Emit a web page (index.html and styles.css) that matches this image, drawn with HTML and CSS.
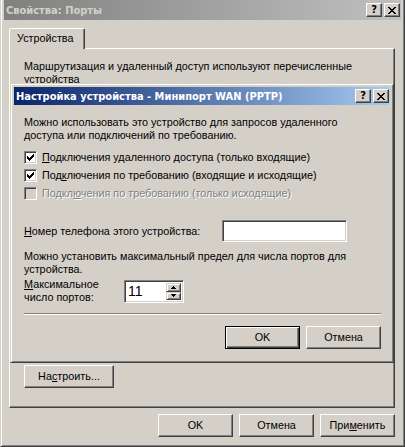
FILE: index.html
```html
<!DOCTYPE html>
<html lang="ru">
<head>
<meta charset="utf-8">
<title>Свойства: Порты</title>
<link rel="stylesheet" href="styles.css">
</head>
<body>
<div class="window">
  <div class="caption inactive">
    <span class="caption-title">Свойства: Порты</span>
    <div class="caption-btns">
      <span class="cbtn help">?</span>
      <span class="cbtn"><svg width="8" height="7" viewBox="0 0 8 7" shape-rendering="crispEdges"><path d="M0 0h2v1H0z M6 0h2v1H6z M1 1h2v1H1z M5 1h2v1H5z M2 2h4v1H2z M3 3h2v1H3z M2 4h4v1H2z M1 5h2v1H1z M5 5h2v1H5z M0 6h2v1H0z M6 6h2v1H6z" fill="#000"/></svg></span>
    </div>
  </div>
  <div class="client">
    <div class="tabs"><div class="tab">Устройства</div></div>
    <div class="panel">
      <p class="text">Маршрутизация и удаленный доступ используют перечисленные<br>устройства</p>
      <div class="spacer"></div>
      <button class="btn wide">На<u>с</u>троить...</button>
    </div>
    <div class="actions">
      <button class="btn">OK</button>
      <button class="btn">Отмена</button>
      <button class="btn">При<u>м</u>енить</button>
    </div>
  </div>

  <div class="dialog">
    <div class="caption active small">
      <span class="caption-title">Настройка устройства - Минипорт WAN (PPTP)</span>
      <div class="caption-btns">
        <span class="cbtn help">?</span>
        <span class="cbtn"><svg width="8" height="7" viewBox="0 0 8 7" shape-rendering="crispEdges"><path d="M0 0h2v1H0z M6 0h2v1H6z M1 1h2v1H1z M5 1h2v1H5z M2 2h4v1H2z M3 3h2v1H3z M2 4h4v1H2z M1 5h2v1H1z M5 5h2v1H5z M0 6h2v1H0z M6 6h2v1H6z" fill="#000"/></svg></span>
      </div>
    </div>
    <div class="dlg-body">
      <p class="text">Можно использовать это устройство для запросов удаленного<br>доступа или подключений по требованию.</p>
      <div class="checks">
        <div class="check-row">
          <span class="cb"><svg width="7" height="7" viewBox="0 0 7 7" shape-rendering="crispEdges"><path d="M6 0h1v1H6z M5 1h2v1H5z M0 2h1v1H0z M4 2h3v1H4z M0 3h2v1H0z M3 3h3v1H3z M0 4h5v1H0z M1 5h3v1H1z M2 6h1v1H2z" fill="#000"/></svg></span>
          <span class="cb-label"><u>П</u>одключения удаленного доступа (только входящие)</span>
        </div>
        <div class="check-row">
          <span class="cb"><svg width="7" height="7" viewBox="0 0 7 7" shape-rendering="crispEdges"><path d="M6 0h1v1H6z M5 1h2v1H5z M0 2h1v1H0z M4 2h3v1H4z M0 3h2v1H0z M3 3h3v1H3z M0 4h5v1H0z M1 5h3v1H1z M2 6h1v1H2z" fill="#000"/></svg></span>
          <span class="cb-label">Под<u>к</u>лючения по требованию (входящие и исходящие)</span>
        </div>
        <div class="check-row">
          <span class="cb disabled"></span>
          <span class="cb-label disabled-text">Подкл<u>ю</u>чения по требованию (только исходящие)</span>
        </div>
      </div>
      <div class="phone-row">
        <span class="phone-label"><u>Н</u>омер телефона этого устройства:</span>
        <span class="edit"></span>
      </div>
      <p class="text ports-text">Можно установить максимальный предел для числа портов для<br>устройства.</p>
      <div class="ports-row">
        <span class="ports-label"><u>М</u>аксимальное<br>число портов:</span>
        <div class="spin">
          <span class="spin-value">11</span>
          <div class="spin-btns">
            <span class="sbtn"><svg width="5" height="3" viewBox="0 0 5 3" shape-rendering="crispEdges"><path d="M2 0h1v1H2z M1 1h3v1H1z M0 2h5v1H0z" fill="#000"/></svg></span>
            <span class="sbtn"><svg width="5" height="3" viewBox="0 0 5 3" shape-rendering="crispEdges"><path d="M0 0h5v1H0z M1 1h3v1H1z M2 2h1v1H2z" fill="#000"/></svg></span>
          </div>
        </div>
      </div>
      <div class="sep"></div>
      <div class="dlg-actions">
        <button class="btn default">OK</button>
        <button class="btn">Отмена</button>
      </div>
    </div>
  </div>
</div>
</body>
</html>
```
FILE: styles.css
```css
* { box-sizing: border-box; margin: 0; padding: 0; }
html, body { margin: 0; background: #d4d0c8; }
body {
  font-family: "Liberation Sans", Arial, sans-serif;
  font-size: 10.8px;
  line-height: 13px;
  color: #000;
}
.window {
  position: relative;
  width: 405px;
  height: 447px;
  background: #d4d0c8;
  border: 1px solid;
  border-top: 0;
  border-color: #d4d0c8 #404040 #404040 #d4d0c8;
  box-shadow: inset 1px 0 #fff, inset -1px -1px #808080;
  padding: 0 3px 3px 3px;
  display: flex;
  flex-direction: column;
  overflow: hidden;
}
.caption {
  height: 20px;
  display: flex;
  align-items: center;
  justify-content: space-between;
  padding: 0 1px 0 2px;
  flex: none;
}
.caption.small { height: 18px; }
.caption.inactive {
  background: linear-gradient(to right, #808080, #c0c0c0);
  color: #d4d0c8;
}
.caption.active {
  background: linear-gradient(to right, #0a246a, #a6caf0);
  color: #fff;
}
.caption-title {
  font-family: "DejaVu Sans Condensed", "DejaVu Sans", sans-serif;
  font-weight: bold;
  font-size: 11px;
  white-space: nowrap;
}
.caption-btns { display: flex; gap: 2px; }
.cbtn {
  width: 16px;
  height: 14px;
  background: #d4d0c8;
  border: 1px solid;
  border-color: #fff #404040 #404040 #fff;
  box-shadow: inset -1px -1px #808080;
  display: flex;
  align-items: center;
  justify-content: center;
  color: #000;
}
.cbtn.help {
  font-family: "DejaVu Sans Condensed", "DejaVu Sans", sans-serif;
  font-weight: bold;
  font-size: 11px;
  line-height: 12px;
}

.client {
  flex: 1;
  display: flex;
  flex-direction: column;
  padding: 8px 6px 6px 5px;
}
.tabs { display: flex; }
.tab {
  position: relative;
  z-index: 1;
  width: 76px;
  height: 21px;
  margin-bottom: -1px;
  padding: 0 0 1px 7px;
  background: #d4d0c8;
  border: 1px solid;
  border-bottom: 0;
  border-color: #fff #404040 transparent #fff;
  border-radius: 2px 2px 0 0;
  box-shadow: inset -1px 0 #808080;
  display: flex;
  align-items: center;
}
.panel {
  height: 360px;
  border: 1px solid;
  border-color: #fff #404040 #404040 #fff;
  box-shadow: inset -1px -1px #808080;
  padding: 11px 14px 19px 14px;
  display: flex;
  flex-direction: column;
}
.spacer { flex: 1; }
.text { white-space: nowrap; }

.btn {
  width: 75px;
  height: 23px;
  background: #d4d0c8;
  border: 1px solid;
  border-color: #fff #404040 #404040 #fff;
  box-shadow: inset -1px -1px #808080;
  font: inherit;
  color: #000;
  display: flex;
  align-items: center;
  justify-content: center;
  flex: none;
}
.btn.wide { width: 90px; }
.btn.default {
  border-color: #000;
  box-shadow: inset 1px 1px #fff, inset -1px -1px #404040, inset -2px -2px #808080;
}
.actions {
  display: flex;
  justify-content: flex-end;
  gap: 6px;
  margin-top: 6px;
}

.dialog {
  position: absolute;
  left: 9px;
  top: 83px;
  width: 384px;
  height: 280px;
  z-index: 5;
  background: #d4d0c8;
  border: 1px solid;
  border-color: #d4d0c8 #404040 #404040 #d4d0c8;
  box-shadow: inset 1px 1px #fff, inset -1px -1px #808080;
  padding: 3px;
  display: flex;
  flex-direction: column;
}
.dlg-body {
  flex: 1;
  display: flex;
  flex-direction: column;
  padding: 11px 9px 0 10px;
}
.checks { margin-top: 6px; }
.check-row {
  height: 18px;
  display: flex;
  align-items: center;
  gap: 5px;
}
.cb {
  width: 13px;
  height: 13px;
  background: #fff;
  border: 1px solid;
  border-color: #808080 #fff #fff #808080;
  box-shadow: inset 1px 1px #404040, inset -1px -1px #d4d0c8;
  display: flex;
  align-items: center;
  justify-content: center;
  flex: none;
}
.cb.disabled { background: #d4d0c8; }
.cb-label { white-space: nowrap; }
.disabled-text { color: #808080; text-shadow: 1px 1px #fff; }

.phone-row {
  margin-top: 18px;
  display: flex;
  align-items: center;
}
.phone-label { width: 198px; flex: none; white-space: nowrap; }
.edit {
  width: 125px;
  height: 22px;
  background: #fff;
  border: 1px solid;
  border-color: #808080 #fff #fff #808080;
  box-shadow: inset 1px 1px #404040, inset -1px -1px #d4d0c8;
}
.ports-text { margin-top: 8px; }
.ports-row {
  margin-top: 2px;
  display: flex;
  align-items: flex-start;
}
.ports-label { width: 100px; flex: none; white-space: nowrap; }
.spin {
  margin-top: 2px;
  width: 60px;
  height: 23px;
  background: #fff;
  border: 1px solid;
  border-color: #808080 #fff #fff #808080;
  box-shadow: inset 1px 1px #404040, inset -1px -1px #d4d0c8;
  padding: 2px 2px 2px 3px;
  display: flex;
}
.spin-value {
  flex: 1;
  font-size: 14px;
  line-height: 17px;
}
.spin-btns {
  width: 15px;
  display: flex;
  flex-direction: column;
}
.sbtn {
  flex: 1;
  background: #d4d0c8;
  border: 1px solid;
  border-color: #d4d0c8 #404040 #404040 #d4d0c8;
  box-shadow: inset 1px 1px #fff, inset -1px -1px #808080;
  display: flex;
  align-items: center;
  justify-content: center;
}
.sep {
  margin-top: 9px;
  height: 2px;
  border-top: 1px solid #808080;
  border-bottom: 1px solid #fff;
}
.dlg-actions {
  display: flex;
  justify-content: flex-end;
  gap: 6px;
  margin-top: 11px;
}
```
